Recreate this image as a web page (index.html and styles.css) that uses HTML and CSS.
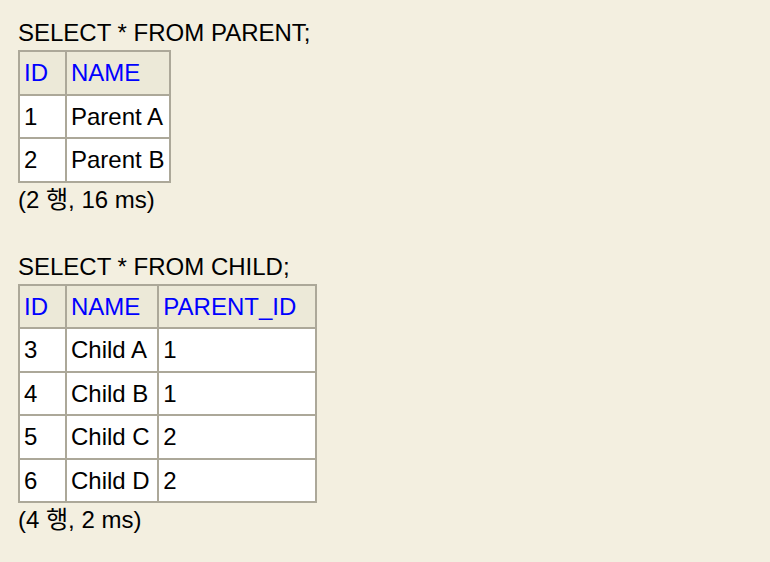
FILE: index.html
```html
<!DOCTYPE html>
<html>
<head>
<meta charset="utf-8">
<link rel="stylesheet" href="styles.css">
</head>
<body>
<div class="result">
  <div class="query">SELECT * FROM PARENT;</div>
  <table class="grid">
    <tr><th>ID</th><th>NAME</th></tr>
    <tr><td>1</td><td>Parent A</td></tr>
    <tr><td>2</td><td>Parent B</td></tr>
  </table>
  <div class="count">(2 행, 16 ms)</div>
</div>
<div class="result">
  <div class="query">SELECT * FROM CHILD;</div>
  <table class="grid">
    <tr><th>ID</th><th>NAME</th><th class="wide">PARENT_ID</th></tr>
    <tr><td>3</td><td>Child A</td><td>1</td></tr>
    <tr><td>4</td><td>Child B</td><td>1</td></tr>
    <tr><td>5</td><td>Child C</td><td>2</td></tr>
    <tr><td>6</td><td>Child D</td><td>2</td></tr>
  </table>
  <div class="count">(4 행, 2 ms)</div>
</div>
</body>
</html>
```
FILE: styles.css
```css
html, body {
  margin: 0;
  background: #f3efe0;
}
body {
  padding: 19px 18px 0;
  font-family: "Liberation Sans", "Noto Sans CJK KR", sans-serif;
  font-size: 24px;
  color: #000;
}
.result {
  margin-bottom: 39px;
}
.result:last-child {
  margin-bottom: 0;
}
.query {
  line-height: 28px;
  margin-bottom: 3px;
}
.grid {
  border-collapse: collapse;
  border: 2px solid #aca899;
}
.grid th, .grid td {
  border: 2px solid #aca899;
  line-height: 27.5px;
  text-align: left;
  vertical-align: middle;
}
.grid th {
  background: #ece9d8;
  color: #0000ff;
  font-weight: normal;
  padding: 7px 17px 7px 4px;
}
.grid th.wide {
  padding-right: 19px;
}
.grid td {
  background: #fff;
  padding: 7px 5px 7px 4px;
}
.count {
  line-height: 28px;
  margin-top: 3px;
}
```
